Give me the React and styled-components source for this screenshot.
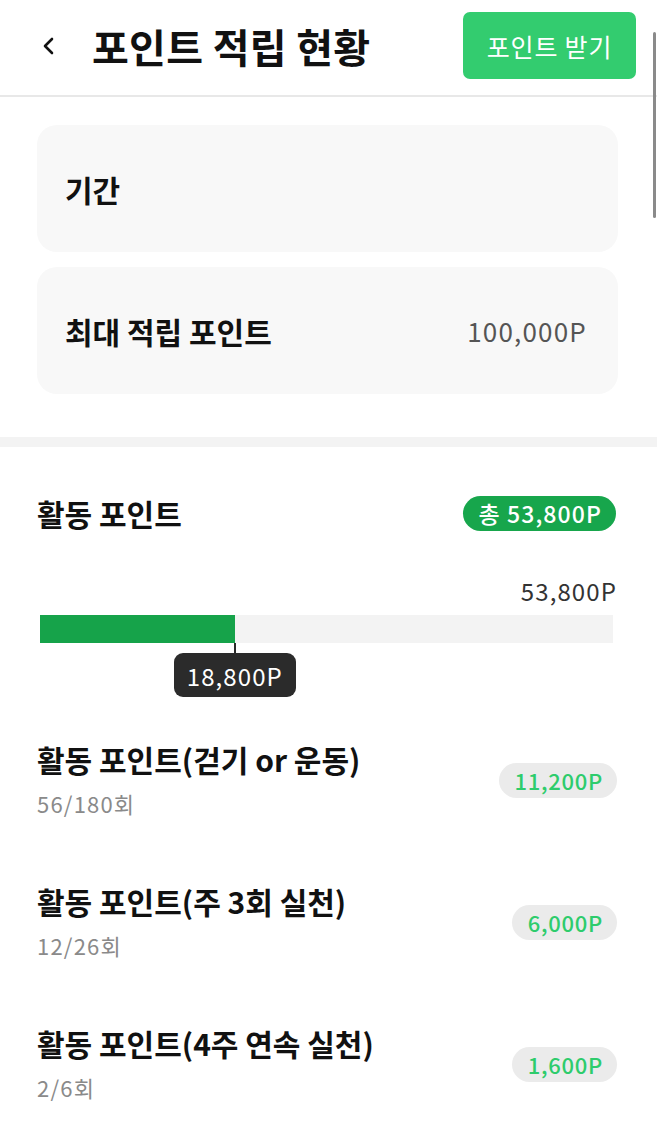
import React from "react";
import styled, { createGlobalStyle } from "styled-components";

const GlobalStyle = createGlobalStyle`
  html, body { margin: 0; padding: 0; background: #ffffff; }
  body {
    font-family: "Noto Sans CJK KR", "Noto Sans", sans-serif;
    color: #111111;
    -webkit-font-smoothing: antialiased;
  }
  * { box-sizing: border-box; }
`;

const Page = styled.div`
  position: relative;
  width: 657px;
  min-height: 1143px;
  background: #fff;
  overflow: hidden;
`;

const ScrollThumb = styled.div`
  position: absolute;
  right: 1px;
  top: 32px;
  width: 3px;
  height: 186px;
  border-radius: 2px;
  background: #8a8a8a;
`;

const Header = styled.header`
  display: flex;
  align-items: center;
  height: 97px;
  padding: 0 21px 4px 36px;
  border-bottom: 2px solid #e8e8e8;
`;

const BackButton = styled.button`
  display: flex;
  align-items: center;
  justify-content: center;
  width: 24px;
  height: 30px;
  padding: 0;
  margin-right: 32px;
  border: none;
  background: none;
  color: #111;
`;

const Title = styled.h1`
  flex: 1;
  margin: 0;
  font-size: 40px;
  font-weight: 700;
  letter-spacing: 0.3px;
  line-height: 1;
`;

const ActionButton = styled.button`
  width: 173px;
  height: 67px;
  border: none;
  border-radius: 7px;
  background: #33cc6f;
  color: #ffffff;
  font-family: inherit;
  font-size: 25px;
  font-weight: 400;
  letter-spacing: 0.8px;
`;

const InfoSection = styled.section`
  display: flex;
  flex-direction: column;
  gap: 15px;
  padding: 28px 39px 43px 37px;
`;

const InfoCard = styled.div`
  display: flex;
  align-items: center;
  justify-content: space-between;
  height: 127px;
  padding: 0 31px 0 28px;
  border-radius: 20px;
  background: #f8f8f8;
`;

const CardLabel = styled.span`
  font-size: 30px;
  font-weight: 700;
  letter-spacing: 0;
`;

const CardValue = styled.span`
  font-size: 26px;
  font-weight: 400;
  letter-spacing: 1.2px;
  color: #555555;
`;

const Divider = styled.div`
  height: 10px;
  background: #f3f3f3;
`;

const ActivitySection = styled.section`
  display: flex;
  flex-direction: column;
  padding: 48px 40px 0 37px;
`;

const SectionHeader = styled.div`
  display: flex;
  align-items: center;
  justify-content: space-between;
  height: 36px;
`;

const SectionTitle = styled.h2`
  margin: 0;
  font-size: 30px;
  font-weight: 700;
  letter-spacing: 0;
`;

const TotalBadge = styled.span`
  display: inline-flex;
  align-items: center;
  height: 35px;
  padding: 0 14px 0 15px;
  border-radius: 18px;
  background: #17a64c;
  color: #ffffff;
  font-size: 23px;
  font-weight: 500;
  letter-spacing: 1.1px;
  margin-right: 1px;
`;

const ProgressBlock = styled.div`
  display: flex;
  flex-direction: column;
  margin-top: 45px;
  padding-left: 3px;
  padding-right: 4px;
`;

const MaxLabel = styled.div`
  align-self: flex-end;
  font-size: 24px;
  letter-spacing: 1.1px;
  color: #333333;
  line-height: 30px;
  margin-right: -4px;
`;

const Track = styled.div`
  position: relative;
  height: 28px;
  margin-top: 9px;
  background: #f3f3f3;
`;

const Fill = styled.div`
  height: 100%;
  background: #16a34a;
`;

const Marker = styled.div`
  position: absolute;
  top: 100%;
  display: flex;
  flex-direction: column;
  align-items: center;
  transform: translateX(-50%);
`;

const MarkerStem = styled.div`
  width: 2px;
  height: 10px;
  background: #2a2a2a;
`;

const Tooltip = styled.div`
  display: flex;
  align-items: center;
  justify-content: center;
  width: 122px;
  height: 44px;
  border-radius: 9px;
  background: #2b2b2b;
  color: #ffffff;
  font-size: 24px;
  letter-spacing: 1.1px;
`;

const ItemList = styled.ul`
  list-style: none;
  margin: 96px 0 0;
  padding: 0;
  display: flex;
  flex-direction: column;
  gap: 62px;
`;

const Item = styled.li`
  display: flex;
  align-items: center;
  justify-content: space-between;
  height: 80px;
`;

const ItemText = styled.div`
  display: flex;
  flex-direction: column;
  gap: 8px;
`;

const ItemTitle = styled.span`
  font-size: 30px;
  font-weight: 700;
  letter-spacing: 0;
  line-height: 40px;
`;

const ItemSub = styled.span`
  font-size: 22px;
  letter-spacing: 1.2px;
  color: #8a8a8a;
  line-height: 32px;
`;

const PointPill = styled.span`
  display: inline-flex;
  align-items: center;
  height: 35px;
  padding: 0 14px 0 16px;
  border-radius: 18px;
  background: #ebebeb;
  color: #2ecc6c;
  font-size: 22px;
  font-weight: 500;
  letter-spacing: 0.7px;
  margin-top: 2px;
`;

const items = [
  { title: "활동 포인트(걷기 or 운동)", sub: "56/180회", points: "11,200P" },
  { title: "활동 포인트(주 3회 실천)", sub: "12/26회", points: "6,000P" },
  { title: "활동 포인트(4주 연속 실천)", sub: "2/6회", points: "1,600P" },
];

const Chevron = () => (
  <svg width="14" height="18" viewBox="0 0 14 18" fill="none">
    <path d="M11 2 L4 9 L11 16" stroke="currentColor" strokeWidth="2.6" strokeLinecap="round" strokeLinejoin="round" />
  </svg>
);

export default function App() {
  const fillPercent = 34;
  return (
    <Page>
      <GlobalStyle />
      <Header>
        <BackButton aria-label="뒤로">
          <Chevron />
        </BackButton>
        <Title>포인트 적립 현황</Title>
        <ActionButton>포인트 받기</ActionButton>
      </Header>

      <InfoSection>
        <InfoCard>
          <CardLabel>기간</CardLabel>
        </InfoCard>
        <InfoCard>
          <CardLabel>최대 적립 포인트</CardLabel>
          <CardValue>100,000P</CardValue>
        </InfoCard>
      </InfoSection>

      <Divider />

      <ActivitySection>
        <SectionHeader>
          <SectionTitle>활동 포인트</SectionTitle>
          <TotalBadge>총 53,800P</TotalBadge>
        </SectionHeader>

        <ProgressBlock>
          <MaxLabel>53,800P</MaxLabel>
          <Track>
            <Fill style={{ width: `${fillPercent}%` }} />
            <Marker style={{ left: `${fillPercent}%` }}>
              <MarkerStem />
              <Tooltip>18,800P</Tooltip>
            </Marker>
          </Track>
        </ProgressBlock>

        <ItemList>
          {items.map((it) => (
            <Item key={it.title}>
              <ItemText>
                <ItemTitle>{it.title}</ItemTitle>
                <ItemSub>{it.sub}</ItemSub>
              </ItemText>
              <PointPill>{it.points}</PointPill>
            </Item>
          ))}
        </ItemList>
      </ActivitySection>
      <ScrollThumb />
    </Page>
  );
}
